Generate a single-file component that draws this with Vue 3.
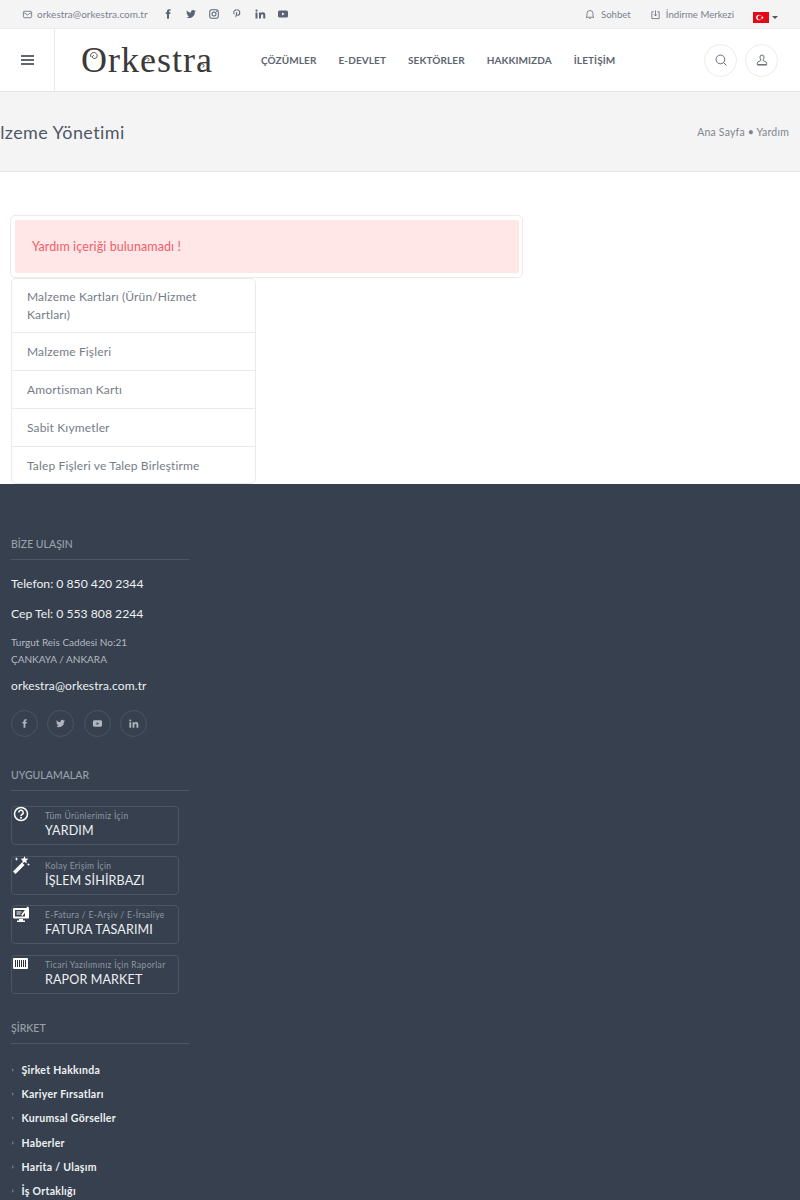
<template>
  <div class="page">
    <div class="topbar">
      <div class="top-left">
        <svg class="ic mail" viewBox="0 0 24 24"><rect x="3" y="5" width="18" height="14" rx="2.500" /><path d="M3.500 7.500 12 13l8.500-5.500" /></svg>
        <span class="top-mail">orkestra@orkestra.com.tr</span>
        <div class="top-social">
          <svg v-for="s in topSocial" :key="s" viewBox="0 0 24 24" class="soc"><path :d="icons[s]" /></svg>
        </div>
      </div>
      <div class="top-right">
        <svg class="ic bell" viewBox="0 0 24 24"><path d="M6 17V11a6 6 0 0 1 12 0v6l2 1.500H4zM10.500 21h3" /></svg>
        <span class="top-link">Sohbet</span>
        <svg class="ic dl" viewBox="0 0 24 24"><path d="M8 6H4v15h16V6h-4M12 3v12M8.500 11.500 12 15l3.500-3.500" /></svg>
        <span class="top-link">İndirme Merkezi</span>
        <svg class="flag" viewBox="0 0 16 11">
          <rect width="16" height="11" fill="#e30a17" />
          <circle cx="6" cy="5.500" r="2.800" fill="#fff" />
          <circle cx="6.800" cy="5.500" r="2.200" fill="#e30a17" />
          <path d="m9.300 4 .4 1.100h1.100l-.9.700.3 1.100-.9-.7-.9.700.3-1.100-.9-.7h1.100z" fill="#fff" />
        </svg>
        <span class="caret"></span>
      </div>
    </div>

    <header class="head">
      <div class="burger"><span></span><span></span><span></span></div>
      <div class="logo">
        Orkestra
        <svg class="curls" viewBox="0 0 132 36">
          <path d="M10 15c-1.500-3 2-5.500 4.500-4s2 5.500-1 5.500-2.500-3-.5-3" />
          <path d="M64 18c0-1.800 2.500-2.500 3.500-1.500s.4 3-1 2.600" />
          <path d="M119 24c0-1.800 2.500-2.500 3.500-1.500s.4 3-1 2.600" />
        </svg>
      </div>
      <nav class="nav">
        <a v-for="n in nav" :key="n">{{ n }}</a>
      </nav>
      <div class="head-btns">
        <button class="round">
          <svg class="ic big" viewBox="0 0 24 24"><circle cx="11" cy="11" r="7.500" /><path d="m16.500 16.500 5 5" /></svg>
        </button>
        <button class="round">
          <svg class="ic big" viewBox="0 0 24 24"><path d="M8.500 7a3.500 3.500 0 0 1 7 0c0 2.500-1.500 3.500-1.500 5.500s6 1.500 6 5V20H4v-2.500c0-4 6-3 6-5S8.500 9.500 8.500 7zM4 20.500h16" /></svg>
        </button>
      </div>
    </header>

    <div class="crumbs">
      <h1 class="title">Malzeme Yönetimi</h1>
      <div class="trail">Ana Sayfa • Yardım</div>
    </div>

    <main class="content">
      <div class="alert-wrap">
        <div class="alert">Yardım içeriği bulunamadı !</div>
      </div>
      <ul class="list">
        <li v-for="m in menu" :key="m">{{ m }}</li>
      </ul>
    </main>

    <footer class="foot">
      <h4 class="foot-h first">BİZE ULAŞIN</h4>
      <p class="phone">Telefon: 0 850 420 2344</p>
      <p class="phone">Cep Tel: 0 553 808 2244</p>
      <p class="addr">Turgut Reis Caddesi No:21<br />ÇANKAYA / ANKARA</p>
      <p class="foot-mail">orkestra@orkestra.com.tr</p>
      <div class="foot-social">
        <span v-for="s in footSocial" :key="s" class="circle">
          <svg viewBox="0 0 24 24"><path :d="icons[s]" /></svg>
        </span>
      </div>

      <h4 class="foot-h apps-h">UYGULAMALAR</h4>
      <div class="apps">
        <div v-for="a in apps" :key="a.name" class="app">
          <svg class="app-ic" viewBox="0 0 18 18" v-html="a.icon"></svg>
          <div class="app-sub">{{ a.sub }}</div>
          <div class="app-name">{{ a.name }}</div>
        </div>
      </div>

      <h4 class="foot-h co-h">ŞİRKET</h4>
      <ul class="links">
        <li v-for="l in links" :key="l">{{ l }}</li>
      </ul>
    </footer>
  </div>
</template>

<script setup>
const icons = {
  facebook: 'M14 8.500V6.800c0-.8.500-1.100 1.100-1.100H17V2.500h-2.800C11.300 2.500 10 4.300 10 6.600v1.900H7.500V12H10v9.500h4V12h2.600l.4-3.500z',
  twitter: 'M22 6c-.8.300-1.500.500-2.300.600.800-.500 1.500-1.300 1.800-2.200-.8.500-1.700.800-2.600 1a4 4 0 0 0-6.900 3.700C8.600 8.900 5.600 7.300 3.600 4.800c-1 1.800-.5 4.100 1.300 5.300-.7 0-1.300-.2-1.800-.5 0 2 1.400 3.700 3.200 4-.6.200-1.200.2-1.800.1.500 1.600 2 2.800 3.800 2.800A8 8 0 0 1 2 18.200 11.500 11.500 0 0 0 19.700 8c.9-.5 1.700-1.200 2.300-2z',
  instagram: 'M7.500 2.500h9a5 5 0 0 1 5 5v9a5 5 0 0 1-5 5h-9a5 5 0 0 1-5-5v-9a5 5 0 0 1 5-5zm0 2a3 3 0 0 0-3 3v9a3 3 0 0 0 3 3h9a3 3 0 0 0 3-3v-9a3 3 0 0 0-3-3zM12 7a5 5 0 1 1 0 10 5 5 0 0 1 0-10zm0 2a3 3 0 1 0 0 6 3 3 0 0 0 0-6zm5.300-3.600a1.200 1.200 0 1 1 0 2.400 1.200 1.200 0 0 1 0-2.400z',
  pinterest: 'M12 2.500c-4.700 0-7.500 3-7.500 6.500 0 1.700.9 3.600 2.300 4.200l.5-2c-.6-.7-.9-1.400-.9-2.300 0-2.500 2-4.500 5.300-4.500 2.900 0 4.700 1.800 4.700 4.300 0 2.900-1.300 5-3.100 5-1 0-1.700-.8-1.500-1.800l1-4h-2l-2.300 10.600.1.100 1.700-.2 1-4c.5.700 1.400 1.200 2.400 1.200 3 0 5-2.800 5-6.200 0-3.900-3-6.900-7.200-6.900z',
  linkedin: 'M3 9h4v12H3zM5 3a2.200 2.200 0 1 1 0 4.400A2.200 2.200 0 0 1 5 3zm5 6h3.800v1.700c.6-1 1.900-2 3.900-2 4 0 4.800 2.600 4.800 6V21h-4v-5.500c0-1.400 0-3.100-1.900-3.100s-2.600 1.500-2.600 3V21h-4z',
  youtube: 'M5 5h14a3 3 0 0 1 3 3v8a3 3 0 0 1-3 3H5a3 3 0 0 1-3-3V8a3 3 0 0 1 3-3zm5 4v6l5.500-3z',
}

const topSocial = ['facebook', 'twitter', 'instagram', 'pinterest', 'linkedin', 'youtube']
const footSocial = ['facebook', 'twitter', 'youtube', 'linkedin']
const nav = ['ÇÖZÜMLER', 'E-DEVLET', 'SEKTÖRLER', 'HAKKIMIZDA', 'İLETİŞİM']
const menu = [
  'Malzeme Kartları (Ürün/Hizmet Kartları)',
  'Malzeme Fişleri',
  'Amortisman Kartı',
  'Sabit Kıymetler',
  'Talep Fişleri ve Talep Birleştirme',
]
const links = ['Şirket Hakkında', 'Kariyer Fırsatları', 'Kurumsal Görseller', 'Haberler', 'Harita / Ulaşım', 'İş Ortaklığı']

const apps = [
  {
    sub: 'Tüm Ürünlerimiz İçin',
    name: 'YARDIM',
    icon: '<circle cx="9" cy="8" r="6.500" fill="none" stroke="#fff" stroke-width="1.500"/><path d="M6.800 6.500a2.200 2.200 0 1 1 3.300 1.900c-.8.500-1.100.8-1.100 1.600" fill="none" stroke="#fff" stroke-width="1.500"/><circle cx="9" cy="11.800" r="1" fill="#fff"/>',
  },
  {
    sub: 'Kolay Erişim İçin',
    name: 'İŞLEM SİHİRBAZI',
    icon: '<path d="M1 15.500 10 6.500l2.500 2.500L3.500 18z" fill="#fff"/><path d="M12.500 0l1 2.500 2.800.3-2 1.900.6 2.800-2.400-1.400-2.400 1.400.6-2.800-2-1.900 2.800-.3zM16.500 7l.4 1.100 1.100.4-1.100.4-.4 1.100-.4-1.100-1.100-.4 1.100-.4zM4.500 1l.5 1.500 1.500.5-1.500.5-.5 1.500-.5-1.500L2.500 3l1.500-.5z" fill="#fff"/>',
  },
  {
    sub: 'E-Fatura / E-Arşiv / E-İrsaliye',
    name: 'FATURA TASARIMI',
    icon: '<rect x="1" y="3" width="16" height="10.500" rx="1" fill="#fff"/><rect x="3" y="5" width="10" height="6.500" fill="#36404e"/><path d="M4.500 7h5M4.500 9h4" stroke="#fff" stroke-width="1"/><path d="m9 10 6.500-8.500 1.500 1L10.500 11z" fill="#fff"/><path d="M7 14h4v1.500h2V17H5v-1.500h2z" fill="#fff"/>',
  },
  {
    sub: 'Ticari Yazılımınız İçin Raporlar',
    name: 'RAPOR MARKET',
    icon: '<rect x="1" y="3" width="15" height="11" rx="1" fill="#fff"/><path d="M3.500 5v7M5.500 5v7M7.500 5v7M9.500 5v7M11.500 5v7M13.500 5v7" stroke="#2a303a" stroke-width="1"/>',
  },
]
</script>

<style>
body { background: #fff; }
</style>

<style scoped>
.page {
  width: 800px;
  height: 1200px;
  overflow: hidden;
  font-family: Lato, "Liberation Sans", sans-serif;
  color: #6b7280;
}

.topbar {
  height: 28px;
  background: #f4f4f5;
  border-bottom: 1px solid #ececee;
  display: flex;
  justify-content: space-between;
  align-items: center;
  font-size: 10px;
  color: #7b828e;
}

.top-left, .top-right { display: flex; align-items: center; }
.top-left { padding-left: 22px; }
.top-right { padding-right: 22px; }

.ic {
  width: 11px;
  height: 11px;
  fill: none;
  stroke: #5c6470;
  stroke-width: 1.700;
  flex: none;
}

.bell { width: 12px; height: 12px; stroke-width: 1.500; }

.top-mail { margin-left: 4px; }

.top-social { display: flex; gap: 11px; margin-left: 14px; }
.soc { width: 12px; height: 12px; fill: #5a6474; }

.dl { margin-left: 19px; }
.top-link { margin-left: 5px; font-size: 9.600px; }

.flag {
  width: 16px;
  height: 11px;
  margin-left: 19px;
  margin-top: 7px;
  flex: none;
}

.caret {
  width: 0;
  height: 0;
  border: 3px solid transparent;
  border-top-color: #555;
  border-bottom: 0;
  margin-left: 3px;
  margin-top: 6px;
}

.head {
  height: 62px;
  background: #fff;
  border-bottom: 1px solid #e5e6e8;
  display: flex;
  align-items: center;
}

.burger {
  width: 54px;
  height: 100%;
  border-right: 1px solid #e8e9eb;
  display: flex;
  flex-direction: column;
  justify-content: center;
  align-items: center;
  gap: 2.500px;
  flex: none;
}

.burger span { width: 13px; height: 1.500px; background: #5f6773; }

.logo {
  font-family: "Liberation Serif", serif;
  font-size: 36px;
  color: #3a3a3a;
  letter-spacing: 1px;
  margin-left: 26px;
  width: 180px;
  flex: none;
  line-height: 1;
  position: relative;
}

.curls {
  position: absolute;
  left: 0;
  top: 0;
  width: 132px;
  height: 36px;
  fill: none;
  stroke: #3a3a3a;
  stroke-width: 0.900;
}

.nav { display: flex; gap: 22px; font-size: 10px; font-weight: 700; letter-spacing: 0.1px; color: #5d6570; }

.head-btns { margin-left: auto; padding-right: 22px; display: flex; gap: 8px; }

.round {
  width: 33px;
  height: 33px;
  border-radius: 50%;
  border: 1px solid #ececee;
  background: #fff;
  padding: 0;
  display: flex;
  align-items: center;
  justify-content: center;
}

.big { width: 14px; height: 14px; stroke-width: 1.600; }

.crumbs {
  height: 79px;
  background: #f4f4f5;
  border-bottom: 1px solid #e5e6e8;
  display: flex;
  justify-content: space-between;
  align-items: center;
  padding-right: 11px;
}

.title {
  margin: 0 0 0 -26px;
  font-size: 18px;
  font-weight: 400;
  letter-spacing: 0.4px;
  color: #4f5865;
  white-space: nowrap;
}

.trail { font-size: 10.500px; letter-spacing: 0.2px; color: #7f858f; }

.content {
  height: 312px;
  padding: 43px 0 0 10px;
  box-sizing: border-box;
}

.alert-wrap {
  width: 513px;
  height: 63px;
  box-sizing: border-box;
  padding: 4px 3px 4px 4px;
  border: 1px solid #f3e7e8;
  border-radius: 5px;
}

.alert {
  height: 53px;
  background: #ffe6e7;
  border-radius: 2px;
  padding-left: 17px;
  display: flex;
  align-items: center;
  font-size: 12.500px;
  letter-spacing: 0.1px;
  color: #ef5f69;
}

.list {
  list-style: none;
  margin: 0 0 0 1px;
  padding: 0;
  width: 245px;
  box-sizing: border-box;
  border: 1px solid #e9eaec;
  border-radius: 5px;
  font-size: 12px;
  letter-spacing: 0.15px;
  color: #757c87;
  line-height: 18px;
}

.list li {
  padding: 10px 15px 9px;
  border-bottom: 1px solid #e9eaec;
}

.list li:first-child { padding-top: 9px; padding-bottom: 8px; }
.list li:last-child { border-bottom: 0; padding-bottom: 8px; }

.foot {
  height: 716px;
  background: #36404e;
  padding: 53px 0 0 11px;
  box-sizing: border-box;
  color: #fff;
  overflow: hidden;
}

.foot-h {
  margin: 0;
  width: 178px;
  padding-bottom: 7px;
  border-bottom: 1px solid #4b5563;
  font-size: 10.500px;
  line-height: 15px;
  font-weight: 500;
  color: #98a1ac;
}

.phone {
  margin: 0;
  font-size: 12.200px;
  line-height: 18px;
  color: #eef0f2;
}

.first { margin-bottom: 15px; }
.phone + .phone { margin-top: 12px; }

.addr {
  margin: 11px 0 0;
  font-size: 10px;
  line-height: 17px;
  color: #b4bac2;
}

.foot-mail {
  margin: 9px 0 1px;
  font-size: 12px;
  letter-spacing: 0.12px;
  line-height: 17px;
  color: #eef0f2;
}

.foot-social { display: flex; gap: 9.330px; margin-top: 16px; }

.circle {
  width: 27px;
  height: 27px;
  box-sizing: border-box;
  border: 1px solid #4b5563;
  border-radius: 50%;
  display: flex;
  align-items: center;
  justify-content: center;
}

.circle svg { width: 11px; height: 11px; fill: #aeb5be; }

.apps-h { margin-top: 31px; }

.apps { display: flex; flex-direction: column; gap: 10.500px; margin-top: 15px; }

.app {
  width: 168px;
  height: 39px;
  box-sizing: border-box;
  border: 1px solid #4b5563;
  border-radius: 4px;
  padding: 4px 0 0 33px;
  position: relative;
}

.app-ic {
  position: absolute;
  left: 0;
  top: -1px;
  width: 18px;
  height: 18px;
}

.app-sub { font-size: 8.500px; letter-spacing: 0.35px; line-height: 11px; color: #8f98a3; white-space: nowrap; }
.app-name { font-size: 12.500px; letter-spacing: 0.15px; line-height: 17px; color: #eef0f2; white-space: nowrap; }

.co-h { margin-top: 27px; }

.links {
  list-style: none;
  margin: 14px 0 0;
  padding: 0;
  font-size: 10.500px;
  font-weight: 700;
  letter-spacing: 0.3px;
  color: #eef0f2;
}

.links li {
  height: 24.400px;
  line-height: 24.400px;
  padding-left: 10.500px;
  position: relative;
}

.links li::before {
  content: "";
  position: absolute;
  left: 1px;
  top: 10px;
  border: 2px solid transparent;
  border-left-color: #6b7480;
  border-right: 0;
}
</style>
